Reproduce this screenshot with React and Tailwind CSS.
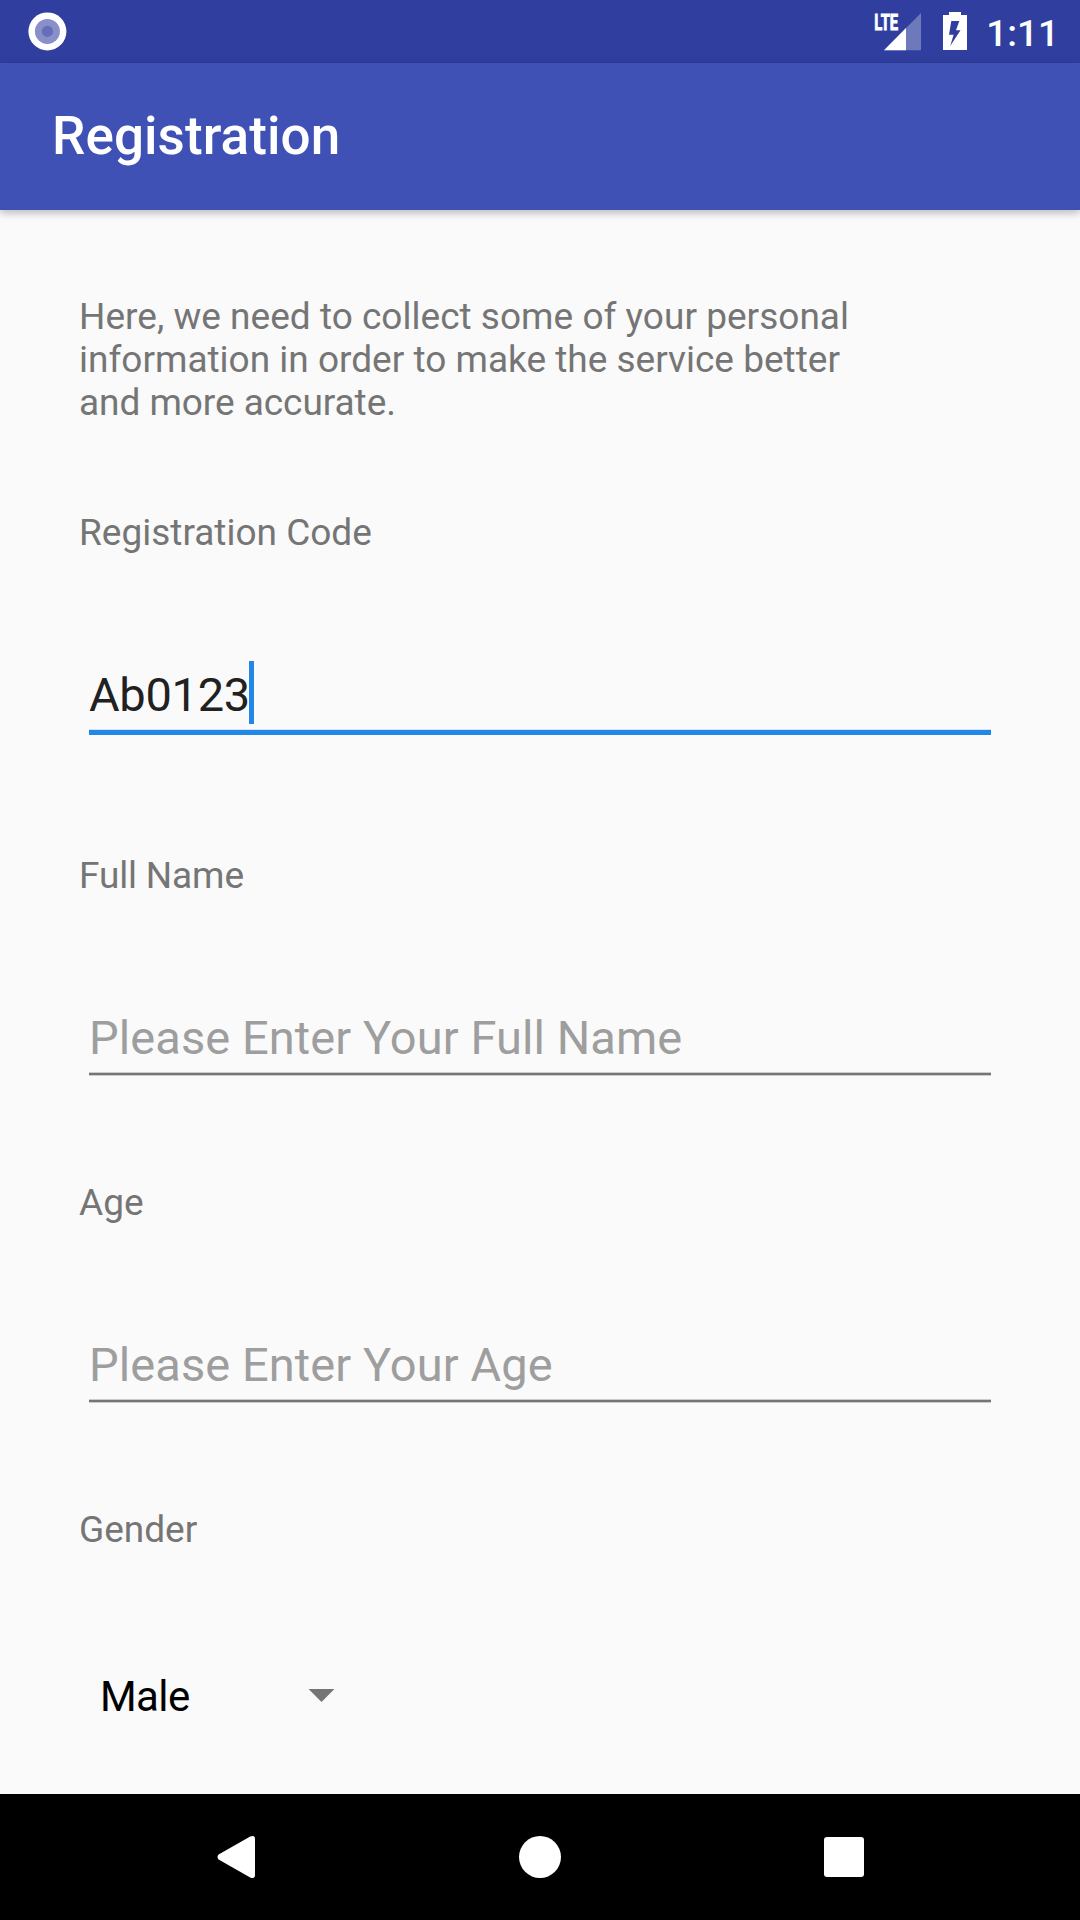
const CONTENT_LABEL = "h-[43px] text-[37px] leading-[43px] text-[#757575]";

function StatusBar() {
  return (
    <div className="flex h-[63px] shrink-0 items-start justify-between bg-[#303f9f]">
      <svg className="ml-[28px] mt-[12px]" width="39" height="39" viewBox="0 0 39 39">
        <circle cx="19.4" cy="19.4" r="19" fill="#fff" />
        <circle cx="19.4" cy="19.4" r="12.5" fill="#8790c9" />
        <circle cx="19.4" cy="19.4" r="5.6" fill="#666eb8" />
      </svg>
      <div className="flex">
        <svg className="overflow-visible" width="48" height="52" viewBox="0 -12 48 52">
          <path d="M10 38.2 47 1v37.2z" fill="#fff" fillOpacity="0.3" />
          <path d="M10 38.2 32 16v22.2z" fill="#fff" />
          <text
            transform="translate(0.3 17.8) scale(0.655 1)"
            fontSize="22.6"
            fontWeight="700"
            fill="#fff"
            stroke="#fff"
            strokeWidth="0.9"
          >
            LTE
          </text>
        </svg>
        <svg className="ml-[21px] mt-[12px]" width="24" height="38" viewBox="0 0 24 38">
          <path
            d="M6 0h12v3h6v35H0V3h6zM8.3 9H16.3L13 18.2H17.5L7.2 34 10.6 22.8H6z"
            fill="#fff"
            fillRule="evenodd"
          />
        </svg>
        <span className="ml-[19px] mr-[21px] mt-[12px] text-[37px] font-medium leading-[43px] text-white">
          1:11
        </span>
      </div>
    </div>
  );
}

function Field({ label, children, className }) {
  return (
    <div className={className}>
      <div className={CONTENT_LABEL}>{label}</div>
      <div className="ml-[10px] mt-[113px] w-[902px] text-[47px] leading-[56px]">{children}</div>
    </div>
  );
}

function EmptyInput({ hint }) {
  return (
    <>
      <div className="h-[56px] tracking-[0.08px] text-[#9e9e9e]">{hint}</div>
      <div className="mt-[6px] h-[4px] border-y border-[#cccccc] bg-[#757575]" />
    </>
  );
}

export default function App() {
  return (
    <div className="flex h-[1920px] w-[1080px] flex-col overflow-hidden bg-[#fafafa] font-['Roboto',sans-serif]">
      <StatusBar />
      <header className="h-[147px] shrink-0 bg-[#3f51b5] pl-[52px] pt-[42px] text-[53px] font-medium leading-[62px] tracking-[0.08px] text-white shadow-[0_3px_8px_rgba(0,0,0,0.26)]">
        Registration
      </header>
      <main className="flex flex-1 flex-col pl-[79px] pt-[85px]">
        <p className="text-[37px] leading-[43px] text-[#757575]">
          <span className="tracking-[0.02px]">Here, we need to collect some of your personal</span>
          <br />
          information in order to make the service better
          <br />
          <span className="tracking-[-0.05px]">and more accurate.</span>
        </p>
        <Field label="Registration Code" className="mt-[87px]">
          <div className="flex h-[56px] text-[#212121]">
            <span className="tracking-[-0.3px]">Ab0123</span>
            <span className="-ml-px -mt-[6px] h-[63px] w-[5px] bg-[#2287e6]" />
          </div>
          <div className="mt-[6px] h-[6px] border-t border-[#cfe3f6] bg-[#2287e6]" />
        </Field>
        <Field label={<span className="tracking-[-0.15px]">Full Name</span>} className="mt-[119px]">
          <EmptyInput hint="Please Enter Your Full Name" />
        </Field>
        <Field label="Age" className="mt-[105px]">
          <EmptyInput hint="Please Enter Your Age" />
        </Field>
        <div className={`mt-[105px] ${CONTENT_LABEL}`}>Gender</div>
        <div className="ml-[21px] mt-[121px] flex h-[50px] w-[235px] justify-between text-[42px] leading-[50px] tracking-[-0.6px] text-black">
          Male
          <svg className="mt-[17px]" width="27" height="13" viewBox="0 0 27 13">
            <path d="M.6 0h25.8L13.5 13z" fill="#757575" />
          </svg>
        </div>
      </main>
      <nav className="flex h-[126px] shrink-0 items-center justify-between bg-black pl-[217px] pr-[216px]">
        <svg width="39" height="44" viewBox="0 0 39 44">
          <path
            d="M1.6 19.6 33.2 1.6Q38-.4 38 4V40Q38 44.4 33.2 42.4L1.6 24.4Q-.6 22 1.6 19.6z"
            fill="#fff"
          />
        </svg>
        <div className="mr-[1px] size-[42px] rounded-full bg-white" />
        <div className="size-[40px] rounded-[3px] bg-white" />
      </nav>
    </div>
  );
}
